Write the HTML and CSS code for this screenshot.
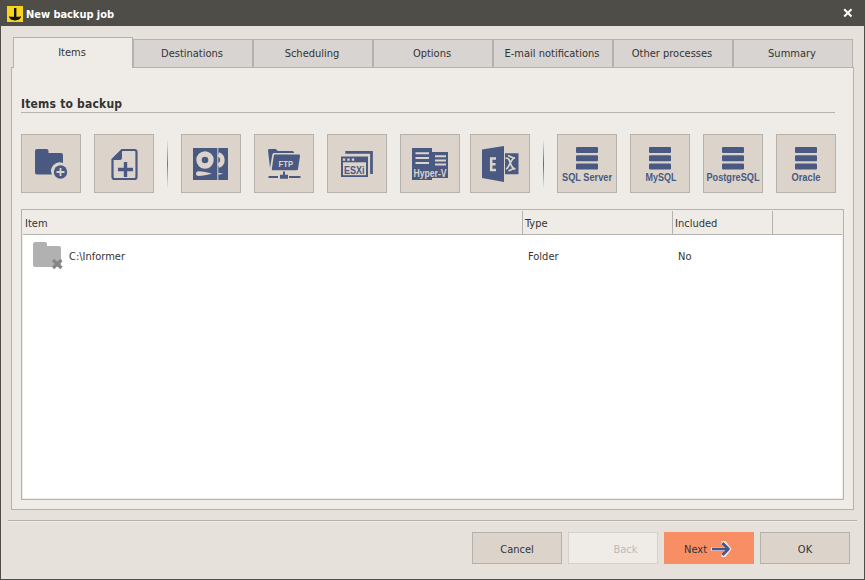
FILE: index.html
```
<!DOCTYPE html>
<html lang="en">
  <head>
    <meta charset="UTF-8">
    <title>New backup job</title>
    <link rel="stylesheet" href="styles.css">
  </head>
  <body>
    <svg width="0" height="0" class="defs">
      <symbol id="database" viewBox="0 0 22 23">
        <rect width="22" height="6" y="0" rx="1"/>
        <rect width="22" height="6" y="8.2" rx="1"/>
        <rect width="22" height="6" y="16.6" rx="1"/>
      </symbol>
    </svg>
    <div class="window">
      <header class="titlebar">
        <svg class="logo" width="16" height="16" viewBox="0 0 16 16">
          <rect width="16" height="16" fill="#f8d41c"/>
          <path d="M7 2h2.400v8.800H12c1 0 1.700-.3 2-.8.1 2.500-2.600 4.400-6 4.400s-6-1.900-6-4.400c.3.500 1 .8 2 .8h3z" fill="#15130c"/>
        </svg>
        <h1>New backup job</h1>
        <svg class="close" width="10" height="10" viewBox="0 0 10 10"><path d="M1.200 1.200l7.300 7.300M8.500 1.200L1.200 8.500" stroke="#fff" stroke-width="2"/></svg>
      </header>

      <nav class="tabs">
        <a class="tab active">Items</a>
        <a class="tab">Destinations</a>
        <a class="tab">Scheduling</a>
        <a class="tab">Options</a>
        <a class="tab">E-mail notifications</a>
        <a class="tab">Other processes</a>
        <a class="tab">Summary</a>
      </nav>

      <main class="panel">
        <h2>Items to backup</h2>

        <div class="toolbar">
          <button class="tool">
            <svg viewBox="0 0 58 57">
              <path d="M15 14h9.500a2 2 0 0 1 2 2v2H39a2 2 0 0 1 2 2v8a8.500 8.500 0 0 0-11 11.500H15a2 2 0 0 1-2-2V16a2 2 0 0 1 2-2z"/>
              <circle cx="38.500" cy="37" r="6.700"/>
              <path class="cut" d="M34.500 37h8M38.500 33v8" stroke-width="1.800"/>
            </svg>
          </button>
          <button class="tool">
            <svg viewBox="0 0 58 57">
              <path class="line" d="M27 15h12.500a2 2 0 0 1 2 2v25a2 2 0 0 1-2 2H19.500a2 2 0 0 1-2-2V24.500z" stroke-width="2.200"/>
              <path d="M17 25l10-10.500V23a2 2 0 0 1-2 2z"/>
              <path class="line" d="M23 34.500h15M30.500 27v15" stroke-width="3.400"/>
            </svg>
          </button>
          <span class="separator"></span>
          <button class="tool">
            <svg viewBox="0 0 58 57">
              <path d="M11 13h24.300v32H11zM36.300 13H46v32h-9.700z"/>
              <circle class="cut" cx="23" cy="25" r="6" stroke-width="5.400"/>
              <path class="cut" d="M36.300 19.300a6 6 0 0 1 0 11.400" stroke-width="4.500"/>
              <path class="paper" d="M16.500 36.300c4 .2 9 1 13.500 2.400-4.500 1.200-9.500 2.100-13.500 2.300-3.300 0-3.300-4.700 0-4.700zM36.300 37.700c2 .2 3.500.5 5 1-1.500.5-3 .8-5 1z"/>
            </svg>
          </button>
          <button class="tool">
            <svg viewBox="0 0 58 57">
              <path d="M15 33L13 15.500a1.300 1.300 0 0 1 1.300-1.500h6.500l2 2H37.500a1.500 1.500 0 0 1 1.500 1.500V18H19.500c-1.200 0-2 .6-2.200 1.800z"/>
              <path d="M20 19.500h23.800a1.200 1.200 0 0 1 1.200 1.400l-2 13.200a1.400 1.400 0 0 1-1.400 1.200H18a1.200 1.200 0 0 1-1.200-1.400l2-13.200a1.300 1.300 0 0 1 1.200-1.200z"/>
              <path class="line" d="M13.500 42H23M34 42h11.500" stroke-width="2"/>
              <path d="M28 36.500h2V39.800h3v4h-8v-4h3z"/>
              <text class="paper" x="23.500" y="31.500" font-size="9" textLength="14.500" lengthAdjust="spacingAndGlyphs">FTP</text>
            </svg>
          </button>
          <button class="tool">
            <svg viewBox="0 0 58 57">
              <path class="line" d="M17.300 17.300H43.500V39" stroke-width="2.700"/>
              <path d="M13 21.500h27V42H13z"/>
              <path class="paper" d="M15 27.300h23v12.900H15z"/>
              <path class="paper" d="M14.800 23.500h2.400v2.200h-2.400zM19.300 23.500h2.400v2.200h-2.400zM23.800 23.500h2.400v2.200h-2.400z"/>
              <text x="16" y="39" font-size="11" textLength="20.500" lengthAdjust="spacingAndGlyphs">ESXi</text>
            </svg>
          </button>
          <button class="tool narrow-gap">
            <svg viewBox="0 0 58 57">
              <path d="M11 13h20v4h16V43H31v2H11z"/>
              <path class="cut" d="M14.500 18.200H28M14.500 23H28M14.500 28H28M34 21.200h11M34 25.400h11M34 29.500h11" stroke-width="2"/>
              <text class="paper" x="12.500" y="41.500" font-size="10.500" textLength="33" lengthAdjust="spacingAndGlyphs">Hyper-V</text>
            </svg>
          </button>
          <button class="tool">
            <svg viewBox="0 0 58 57">
              <path d="M11 14.500L33 11v36l-22-4zM34 18.300h13.500v21H34z"/>
              <path class="cut" d="M25 23.500h-4.800v11.500H25M20 29.300h4.500" stroke-width="2.500"/>
              <path class="cut" d="M34.500 23c4 0 3.500 2 5 5.500s2 5 5 5.500M44 22.500c-3 1-4 4-5 6s-2 5-4 5.500M37 20.500l5.500 2.500M37.500 36l6-3" stroke-width="1.700"/>
            </svg>
          </button>
          <span class="separator blue"></span>
          <button class="tool">
            <svg viewBox="0 0 58 57">
              <use href="#database" x="18" y="12" width="22" height="23"/>
              <text x="4" y="46" font-size="10" textLength="50" lengthAdjust="spacingAndGlyphs">SQL Server</text>
            </svg>
          </button>
          <button class="tool">
            <svg viewBox="0 0 58 57">
              <use href="#database" x="18" y="12" width="22" height="23"/>
              <text x="14.500" y="46" font-size="10" textLength="31" lengthAdjust="spacingAndGlyphs">MySQL</text>
            </svg>
          </button>
          <button class="tool">
            <svg viewBox="0 0 58 57">
              <use href="#database" x="18" y="12" width="22" height="23"/>
              <text x="2.500" y="46" font-size="10" textLength="53" lengthAdjust="spacingAndGlyphs">PostgreSQL</text>
            </svg>
          </button>
          <button class="tool">
            <svg viewBox="0 0 58 57">
              <use href="#database" x="18" y="12" width="22" height="23"/>
              <text x="14.500" y="46" font-size="10" textLength="29" lengthAdjust="spacingAndGlyphs">Oracle</text>
            </svg>
          </button>
        </div>

        <div class="list">
          <div class="row head">
            <span>Item</span>
            <span>Type</span>
            <span>Included</span>
            <span></span>
          </div>
          <div class="row">
            <span class="item">
              <svg width="30" height="28" viewBox="0 0 30 28">
                <path d="M2 0h10a2 2 0 0 1 2 2v2h12a2 2 0 0 1 2 2v19H2a2 2 0 0 1-2-2V2a2 2 0 0 1 2-2z" fill="#b1b1b1"/>
                <path d="M20 18l8.500 8M28.500 18L20 26" stroke="#858585" stroke-width="3.200"/>
              </svg>
              C:\Informer
            </span>
            <span>Folder</span>
            <span>No</span>
          </div>
        </div>
      </main>

      <footer>
        <button class="btn">Cancel</button>
        <button class="btn disabled">Back</button>
        <button class="btn next">
          Next
          <svg width="21" height="16" viewBox="0 0 21 16">
            <g fill="none" stroke-linejoin="round">
              <path d="M0 8h17M10.500 1.500h3l5 6.500-5 6.500h-3" stroke="#f4e4e4" stroke-width="3.500"/>
              <path d="M1 8H17M11.500 2l6 6-6 6" stroke="#40588f" stroke-width="2.700"/>
            </g>
          </svg>
        </button>
        <button class="btn">OK</button>
      </footer>
    </div>
  </body>
</html>
```
FILE: styles.css
```
* {
  box-sizing: border-box;
}

body {
  margin: 0;
  font-family: "DejaVu Sans Condensed", "DejaVu Sans", sans-serif;
  font-stretch: condensed;
  font-size: 11px;
  color: #333;
}

button {
  font: inherit;
  color: inherit;
  padding: 0;
}

.defs {
  display: block;
}

.window {
  display: flex;
  flex-direction: column;
  width: 865px;
  height: 580px;
  border: 1px solid #4f4d48;
  border-top: none;
  background: #e6e1db;
}

.titlebar {
  display: flex;
  align-items: center;
  height: 26px;
  margin: 0 -1px;
  padding: 2px 12px 0 7px;
  background: #4f4d48;
  color: #fff;
}

.titlebar h1 {
  flex: 1;
  margin: 0 0 0 3px;
  font-size: 11px;
  letter-spacing: -0.05px;
}

.close {
  margin-top: -2px;
}

.tabs {
  display: flex;
  align-items: flex-end;
  height: 31px;
  margin: 11px 0 -1px 12px;
  z-index: 1; /* the panel slides one pixel under the tabs */
}

.tab {
  width: 120px;
  height: 29px;
  padding-right: 2px;
  border: 1px solid #b5b2ad;
  background: #d8d4d1;
  line-height: 27px;
  text-align: center;
}

.tab.active {
  height: 31px;
  border-bottom: none;
  background: #efece7;
  line-height: 29px;
}

.panel {
  width: 843px;
  height: 443px;
  margin-left: 10px;
  padding: 27px 9px 0;
  border: 1px solid #b5b2ad;
  background: #efece7;
}

.panel h2 {
  height: 18px;
  margin: 0 9px 21px 0;
  border-bottom: 1px solid #b5b2ad;
  font-size: 12px;
  letter-spacing: 0.2px;
  line-height: 18px;
}

.toolbar {
  display: flex;
  align-items: center;
  height: 59px;
}

.tool {
  width: 60px;
  height: 59px;
  margin-right: 13px;
  flex: none;
  border: 1px solid #b5b2ad;
  background: #dcd4cb;
}

.tool.narrow-gap {
  margin-right: 10px;
}

.tool svg {
  display: block;
  width: 58px;
  height: 57px;
  overflow: visible;
  fill: #4a5981;
  font-family: "Liberation Sans", sans-serif;
  font-weight: bold;
}

.tool .line {
  fill: none;
  stroke: #4a5981;
}

.tool .cut {
  fill: none;
  stroke: #dcd4cb;
}

.tool .paper {
  fill: #dcd4cb;
}

.separator {
  flex: none;
  width: 1px;
  height: 50px;
  margin-right: 13px;
  background: linear-gradient(#efece7, #81766f, #efece7);
}

.separator.blue {
  background: linear-gradient(#efece7, #59677c, #efece7);
}

.list {
  height: 291px;
  margin-top: 16px;
  padding: 1px;
  border: 1px solid #b5b2ad;
  background: #fff;
  box-shadow: inset 0 0 0 1px #efece7;
}

.row {
  display: grid;
  grid-template-columns: 500px 150px 100px 1fr;
  height: 42px;
  align-items: center;
}

.row span {
  padding-left: 5px;
}

.head {
  height: 24px;
  border-bottom: 1px solid #b5b2ad;
  background: #efece7;
}

.head span {
  height: 23px;
  padding-left: 2px;
  border-right: 1px solid #b5b2ad;
  line-height: 25px;
}

.head span:last-child {
  border: none;
}

.row .item {
  display: flex;
  align-items: center;
  gap: 6px;
  padding-left: 10px;
}

footer {
  display: flex;
  justify-content: flex-end;
  gap: 6px;
  margin: 10px 7px 0;
  padding: 11px 7px 0;
  border-top: 1px solid #b5b2ad;
  box-shadow: inset 0 1px #efece7;
}

.btn {
  display: flex;
  align-items: center;
  justify-content: center;
  width: 90px;
  height: 32px;
  padding-top: 2px;
  border: 1px solid #b5b2ad;
  background: #dcd4cb;
}

.btn.disabled {
  padding-left: 25px;
  border-color: #d5d2cd;
  background: #efece7;
  color: #bdbab6;
}

.btn.next {
  gap: 4px;
  padding-right: 2px;
  border-color: #f88e64;
  background: #f88e64;
}
```
